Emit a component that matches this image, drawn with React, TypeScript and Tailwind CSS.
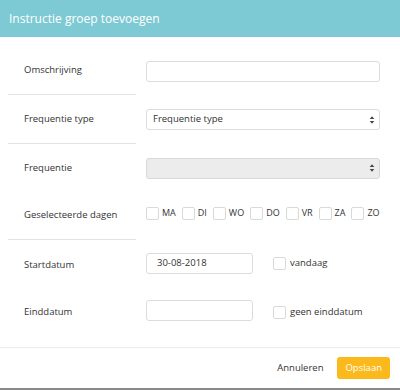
import React from "react";

function Arrows() {
  return (
    <svg width="6" height="9" viewBox="0 0 6 9" className="absolute right-[4px] top-1/2 -translate-y-1/2">
      <path d="M3 0.8 L5.3 3.6 L0.7 3.6 Z" fill="#444" />
      <path d="M3 8.2 L5.3 5.4 L0.7 5.4 Z" fill="#444" />
    </svg>
  );
}

function Box() {
  return <span className="inline-block shrink-0 w-[13px] h-[13px] border border-[#d9d9d9] rounded-[2px] bg-white" />;
}

function Row({
  label,
  line,
  h,
  low,
  children,
}: {
  label: string;
  line?: boolean;
  h: string;
  low?: boolean;
  children?: React.ReactNode;
}) {
  return (
    <div className={`flex ${h}`}>
      <div className={`ml-2 w-[128px] shrink-0 pl-4 flex items-center ${line ? "border-b border-[#e3e3e3]" : ""}`}>
        <span className={low ? "mt-[5px]" : ""}>{label}</span>
      </div>
      <div className="ml-[10px] flex-1 flex items-center pr-5">{children}</div>
    </div>
  );
}

export default function App() {
  const days = ["MA", "DI", "WO", "DO", "VR", "ZA", "ZO"];
  return (
    <div
      className="w-[400px] h-[390px] bg-white text-[#333] text-[9.5px] flex flex-col border-b-2 border-[#8a8a8a]"
      style={{ fontFamily: '"Open Sans", sans-serif' }}
    >
      <div className="h-[37px] shrink-0 bg-[#7ecad4] flex items-center pl-[9px] text-white text-[12px]">
        Instructie groep toevoegen
      </div>
      <div className="pt-[10px] pb-[13px] border-b border-[#ececec]">
        <Row label="Omschrijving" line h="h-[48px]">
          <div className="w-full h-[21px] border border-[#dcdcdc] rounded-[3px]" />
        </Row>
        <Row label="Frequentie type" line h="h-[49px]">
          <div className="relative w-full h-[21px] border border-[#dcdcdc] rounded-[3px] flex items-center pl-[6px]">
            Frequentie type
            <Arrows />
          </div>
        </Row>
        <Row label="Frequentie" h="h-[48px]">
          <div className="relative w-full h-[21px] border border-[#d8d8d8] bg-[#ececec] rounded-[3px]">
            <Arrows />
          </div>
        </Row>
        <Row label="Geselecteerde dagen" line h="h-[48px]">
          <div className="flex items-center gap-[6px] -mt-[6px] text-[9px]">
            {days.map((d) => (
              <div key={d} className="flex items-center gap-[3px]">
                <Box />
                <span>{d}</span>
              </div>
            ))}
          </div>
        </Row>
        <Row label="Startdatum" h="h-[46px]" low>
          <div className="w-[107px] shrink-0 h-[21px] border border-[#dcdcdc] rounded-[3px] flex items-center pl-[10px]">
            30-08-2018
          </div>
          <div className="ml-5 flex items-center gap-[4px]">
            <Box />
            <span>vandaag</span>
          </div>
        </Row>
        <Row label="Einddatum" h="h-[48px]" low>
          <div className="w-[107px] shrink-0 h-[21px] border border-[#dcdcdc] rounded-[3px]" />
          <div className="ml-5 flex items-center gap-[4px] mt-[5px]">
            <Box />
            <span>geen einddatum</span>
          </div>
        </Row>
      </div>
      <div className="flex-1 flex items-center justify-end pr-[10px] gap-[14px]">
        <span>Annuleren</span>
        <div className="h-[22px] px-[8px] rounded-[3px] bg-[#fbb91b] text-white flex items-center">Opslaan</div>
      </div>
    </div>
  );
}
